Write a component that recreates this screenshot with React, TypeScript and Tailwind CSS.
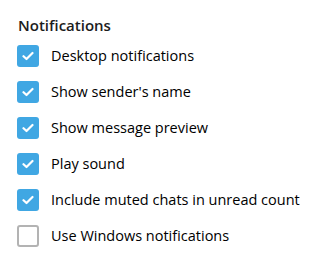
import React from 'react';

const items: { label: string; checked: boolean }[] = [
  { label: 'Desktop notifications', checked: true },
  { label: "Show sender's name", checked: true },
  { label: 'Show message preview', checked: true },
  { label: 'Play sound', checked: true },
  { label: 'Include muted chats in unread count', checked: true },
  { label: 'Use Windows notifications', checked: false },
];

const Checkbox: React.FC<{ checked: boolean }> = ({ checked }) =>
  checked ? (
    <div className="w-[22px] h-[22px] rounded-[3px] bg-[#40a7e3] flex items-center justify-center flex-shrink-0">
      <svg width="12" height="10" viewBox="0 0 12 10" fill="none">
        <path d="M1.5 5.2 L4.5 8 L10.5 2" stroke="white" strokeWidth="2.2" strokeLinecap="round" strokeLinejoin="round" />
      </svg>
    </div>
  ) : (
    <div className="w-[22px] h-[22px] rounded-[3px] border-2 border-[#b3b3b3] bg-white flex-shrink-0" />
  );

export default function App() {
  return (
    <div className="w-[325px] h-[265px] bg-white pl-[17px] pt-[14px] font-['Open_Sans',sans-serif] text-black">
      <h2 className="text-[15px] leading-[22px] font-semibold text-[#1c1c1c] ml-px">Notifications</h2>
      <div className="mt-[9px] flex flex-col gap-[14px]">
        {items.map((item) => (
          <div key={item.label} className="flex items-center gap-[12px] h-[22px]">
            <Checkbox checked={item.checked} />
            <span className="text-[14.5px] leading-[22px] text-[#000]">{item.label}</span>
          </div>
        ))}
      </div>
    </div>
  );
}
